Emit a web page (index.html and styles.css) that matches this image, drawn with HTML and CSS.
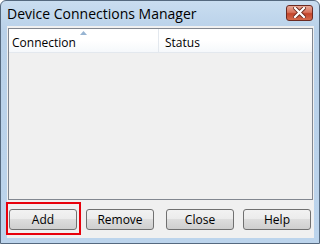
FILE: index.html
```html
<!DOCTYPE html>
<html lang="en">

<head>
  <meta charset="UTF-8">
  <title>Device Connections Manager</title>
  <link rel="stylesheet" href="styles.css">
</head>

<body>
  <div class="window">
    <div class="titlebar">
      <span class="title">Device Connections Manager</span>
      <button class="close-btn">
        <svg width="13" height="11" viewBox="0 0 13 11">
          <path d="M2 1 L11 10 M11 1 L2 10" stroke="#6b2a1e" stroke-width="4" stroke-linecap="square" />
          <path d="M2 1 L11 10 M11 1 L2 10" stroke="#fff" stroke-width="2.2" stroke-linecap="square" />
        </svg>
      </button>
    </div>
    <div class="client">
      <div class="listview">
        <div class="header">
          <div class="col col-conn">
            Connection
            <span class="sort">
              <svg width="7" height="4" viewBox="0 0 7 4">
                <path d="M0 4 L3.5 0 L7 4 Z" fill="#97b4d2" />
              </svg>
            </span>
          </div>
          <div class="col col-status">Status</div>
        </div>
        <div class="rows"></div>
      </div>
      <div class="buttons">
        <div class="focus"><button class="btn">Add</button></div>
        <button class="btn btn-remove">Remove</button>
        <button class="btn btn-close">Close</button>
        <button class="btn btn-help">Help</button>
      </div>
    </div>
  </div>
</body>

</html>
```

FILE: styles.css
```css
body {
  margin: 0;
  font-family: "Open Sans", "Noto Sans", sans-serif;
}

.window {
  width: 320px;
  height: 244px;
  box-sizing: border-box;
  display: flex;
  flex-direction: column;
  border: 1px solid #55697f;
  border-radius: 6px 6px 0 0;
  background: linear-gradient(#c9ddf0, #b9d1e9 30px, #bcd4ec);
}

.titlebar {
  height: 25px;
  display: flex;
  align-items: center;
  justify-content: space-between;
  padding: 0 6px 0 6px;
}

.title {
  font-size: 14px;
  color: #000;
  margin-top: -1px;
}

.close-btn {
  width: 27px;
  height: 16px;
  margin-top: -2px;
  padding: 0;
  display: flex;
  align-items: center;
  justify-content: center;
  border: 1px solid #6b2a22;
  border-radius: 3px;
  background: linear-gradient(#e8a796, #d8735c 45%, #c3442a 55%, #d46a4c);
}

.client {
  flex: 1;
  margin: 0 5px 5px 6px;
  padding: 2px 1px 0 1px;
  background: #f0f0f0;
  display: flex;
  flex-direction: column;
}

.listview {
  height: 172px;
  box-sizing: border-box;
  border: 1px solid #828790;
  display: flex;
  flex-direction: column;
  background: #f0f0f0;
}

.header {
  height: 23px;
  display: flex;
  background: linear-gradient(#ffffff, #ffffff 50%, #f5f8fb);
  border-bottom: 1px solid #e3e8ee;
  font-size: 12px;
  color: #000;
}

.col {
  position: relative;
  display: flex;
  align-items: center;
  padding: 4px 0 0 3px;
}

.col-conn {
  width: 146px;
  border-right: 1px solid #e3e8ee;
}

.sort {
  position: absolute;
  left: 71px;
  top: 2px;
  line-height: 0;
}

.col-status {
  padding-left: 6px;
}

.buttons {
  display: flex;
  align-items: flex-start;
  margin-top: 2px;
}

.focus {
  display: flex;
  border: 2px solid #e8000b;
  padding: 5px 2px 3px 1px;
  margin-left: -2px;
}

.btn {
  width: 68px;
  height: 21px;
  padding: 0;
  margin-top: 7px;
  border: 1px solid #707070;
  border-radius: 3px;
  background: linear-gradient(#f2f2f2, #ebebeb 50%, #dddddd 50%, #cfcfcf);
  font-family: "Open Sans", "Noto Sans", sans-serif;
  font-size: 12px;
  color: #000;
}

.focus .btn {
  margin-top: 0;
}

.btn-remove {
  margin-left: 5px;
}

.btn-close {
  margin-left: 12px;
}

.btn-help {
  margin-left: 9px;
}
```
